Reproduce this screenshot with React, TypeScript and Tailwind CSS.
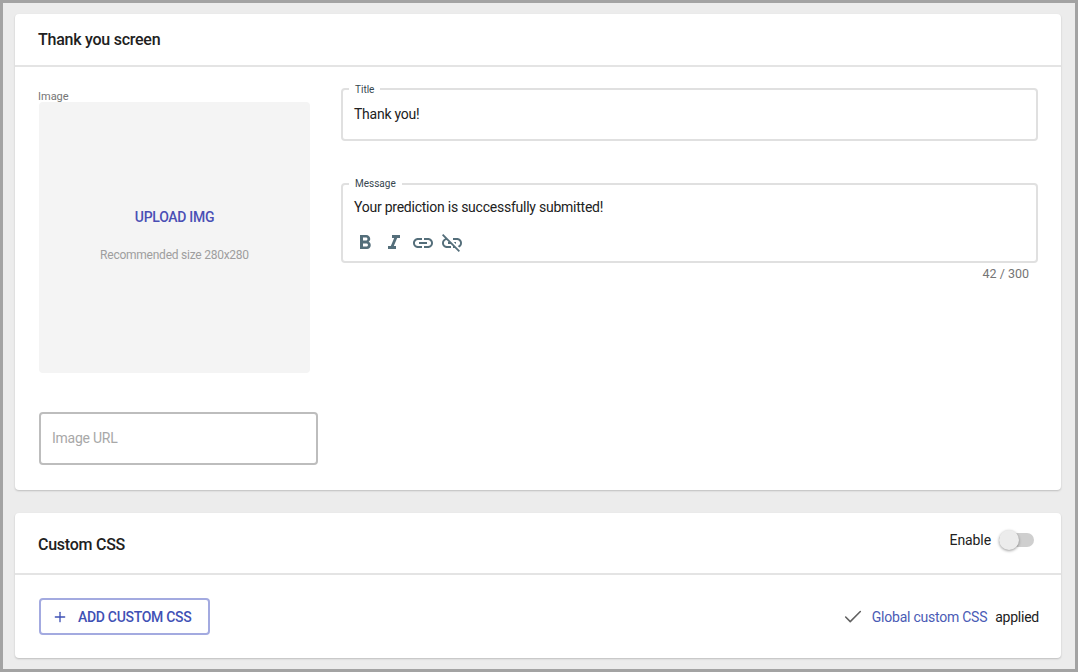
import { Plus, Check } from 'lucide-react';

const ICONS = [
  'M15.6 10.79c.97-.67 1.65-1.77 1.65-2.79 0-2.26-1.75-4-4-4H7v14h7.04c2.09 0 3.71-1.7 3.71-3.79 0-1.52-.86-2.82-2.15-3.42zM10 6.5h3c.83 0 1.5.67 1.5 1.5s-.67 1.5-1.5 1.5h-3v-3zm3.5 9H10v-3h3.5c.83 0 1.5.67 1.5 1.5s-.67 1.5-1.5 1.5z',
  'M10 4v3h2.21l-3.42 8H6v3h8v-3h-2.21l3.42-8H18V4z',
  'M3.9 12c0-1.71 1.39-3.1 3.1-3.1h4V7H7c-2.76 0-5 2.24-5 5s2.24 5 5 5h4v-1.9H7c-1.71 0-3.1-1.39-3.1-3.1zM8 13h8v-2H8v2zm9-6h-4v1.9h4c1.71 0 3.1 1.39 3.1 3.1s-1.39 3.1-3.1 3.1h-4V17h4c2.76 0 5-2.24 5-5s-2.24-5-5-5z',
  'M17 7h-4v1.9h4c1.71 0 3.1 1.39 3.1 3.1 0 1.43-.98 2.63-2.31 2.98l1.46 1.46C20.88 15.61 22 13.95 22 12c0-2.76-2.24-5-5-5zm-1 4h-2.19l2 2H16zM2 4.27l3.11 3.11C3.29 8.12 2 9.91 2 12c0 2.76 2.24 5 5 5h4v-1.9H7c-1.71 0-3.1-1.39-3.1-3.1 0-1.59 1.21-2.9 2.76-3.07L8.73 11H8v2h2.73L13 15.27V17h1.73l4.01 4L20 19.74 3.27 3 2 4.27z',
];

function Legend({ text, top }: { text: string; top: string }) {
  return (
    <span className={`absolute left-[6px] ${top} bg-white px-[6px] text-[10px] leading-[11px] tracking-normal text-[#37474f]`}>
      {text}
    </span>
  );
}

export default function App() {
  return (
    <div className="h-[672px] border-[3px] border-[#a3a3a3] bg-[#ececec] pl-3 pr-[14px] pt-[11px] font-['Roboto',sans-serif] text-sm tracking-[-0.24px] text-[#212121]">
      {/* Thank you screen */}
      <section className="h-[476px] rounded bg-white shadow-[0_1px_2px_rgba(0,0,0,0.2)]">
        <div className="flex h-[53px] items-center border-b-2 border-[#e4e4e4] px-[23px] pt-px">
          <h2 className="text-base font-medium tracking-[-0.25px]">Thank you screen</h2>
        </div>
        <div className="flex gap-[23px] px-[23px]">
          <div className="w-[280px] pt-6">
            <div className="text-[11px] leading-[11px] tracking-normal text-[#757575]">Image</div>
            <div className="ml-px flex h-[271px] w-[271px] flex-col items-center rounded bg-[#f4f4f4] pt-[107px]">
              <span className="text-sm font-medium leading-4 tracking-[-0.3px] text-[#4a4fb5]">UPLOAD IMG</span>
              <span className="mt-[22px] text-xs leading-4 tracking-[-0.24px] text-[#9e9e9e]">Recommended size 280x280</span>
            </div>
            <div className="ml-px mt-[39px] flex h-[53px] w-[279px] items-center rounded border-2 border-[#bdbdbd] px-[11px] pb-[2px] text-[#a8a8a8]">
              Image URL
            </div>
          </div>
          <div className="flex-1 pt-[21px]">
            <div className="relative flex h-[53px] items-center rounded border-2 border-[#e0e0e0] px-[11px] pb-[2px]">
              <Legend text="Title" top="top-[-6px]" />
              Thank you!
            </div>
            <div className="relative mt-[42px] h-[80px] rounded border-2 border-[#e0e0e0] px-[11px] pt-[14px]">
              <Legend text="Message" top="top-[-7px]" />
              <p className="leading-[17px]">Your prediction is successfully submitted!</p>
              <div className="-ml-px mt-[15px] flex gap-[5px]">
                {ICONS.map((d) => (
                  <svg key={d} viewBox="0 0 24 24" className="h-6 w-6 fill-[#546e7a]">
                    <path d={d} />
                  </svg>
                ))}
              </div>
            </div>
            <div className="mt-[3px] pr-[9px] text-right text-[12.5px] leading-4 tracking-normal text-[#757575]">42 / 300</div>
          </div>
        </div>
      </section>

      {/* Custom CSS */}
      <section className="mt-[23px] h-[145px] rounded bg-white shadow-[0_1px_2px_rgba(0,0,0,0.2)]">
        <div className="flex h-[62px] items-center justify-between border-b-2 border-[#e4e4e4] pl-[23px] pr-[27px]">
          <h2 className="pt-[4px] text-base font-medium tracking-[-0.25px]">Custom CSS</h2>
          <div className="flex items-center gap-2 pb-[7px]">
            <span className="tracking-[-0.1px]">Enable</span>
            <span className="relative block h-[14px] w-[35px] rounded-full bg-[#cfcfcf]">
              <span className="absolute left-0 top-[-3px] h-5 w-5 rounded-full bg-[#ececec] shadow-[0_1px_3px_rgba(0,0,0,0.4)]" />
            </span>
          </div>
        </div>
        <div className="flex items-center justify-between pl-6 pr-[22px] pt-[23px]">
          <button className="flex h-[37px] w-[171px] items-center gap-[10px] rounded border-2 border-[#a3aae0] pl-[11px] font-medium tracking-[-0.3px] text-[#3f51b5]">
            <Plus className="h-[16px] w-[16px]" strokeWidth={2} />
            <span className="pt-px">ADD CUSTOM CSS</span>
          </button>
          <div className="flex items-center">
            <Check className="mr-[8px] h-[22px] w-[22px] text-[#616161]" strokeWidth={1.7} />
            <span className="pt-px text-[#4a5bb5]">Global custom CSS</span>
            <span className="ml-2 pt-px">applied</span>
          </div>
        </div>
      </section>
    </div>
  );
}
